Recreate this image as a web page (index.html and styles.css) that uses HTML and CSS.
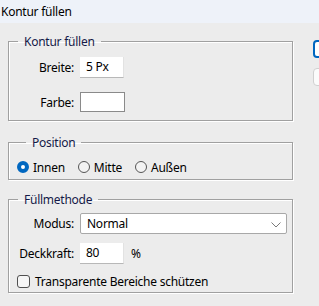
FILE: index.html
```html
<!DOCTYPE html>
<html lang="de">
<head>
<meta charset="utf-8">
<title>Kontur füllen</title>
<link rel="stylesheet" href="styles.css">
</head>
<body>
<div class="title">Kontur füllen</div>
<div class="main">
  <div class="left">
    <fieldset class="group g1">
      <legend>Kontur füllen</legend>
      <div class="row">
        <span class="lbl">Breite:</span>
        <div class="input">5 Px</div>
      </div>
      <div class="row r2">
        <span class="lbl">Farbe:</span>
        <div class="swatch"></div>
      </div>
    </fieldset>
    <fieldset class="group g2">
      <legend>Position</legend>
      <div class="radios">
        <span class="opt"><span class="radio on"></span>Innen</span>
        <span class="opt"><span class="radio"></span>Mitte</span>
        <span class="opt"><span class="radio"></span>Außen</span>
      </div>
    </fieldset>
    <fieldset class="group g3">
      <legend>Füllmethode</legend>
      <div class="row">
        <span class="lbl">Modus:</span>
        <div class="select">Normal
          <svg class="chev" width="10" height="6" viewBox="0 0 10 6"><polyline points="0.5,0.5 5,5 9.5,0.5" fill="none" stroke="#7a7a7a" stroke-width="1"/></svg>
        </div>
      </div>
      <div class="row r3">
        <span class="lbl">Deckkraft:</span>
        <div class="input">80</div>
        <span class="pct">%</span>
      </div>
      <div class="check-row">
        <span class="check"></span>Transparente Bereiche schützen
      </div>
    </fieldset>
  </div>
  <div class="right">
    <div class="btn primary"></div>
    <div class="btn"></div>
  </div>
</div>
</body>
</html>
```

FILE: styles.css
```css
html, body {
  margin: 0;
  padding: 0;
}
body {
  width: 319px;
  height: 306px;
  overflow: hidden;
  background: #ececec;
  font-family: "Noto Sans", "Open Sans", sans-serif;
  font-size: 12px;
  letter-spacing: -0.25px;
  color: #000;
}
.title {
  height: 23px;
  line-height: 23px;
  padding-left: 1px;
  background: #eef2f9;
}
.main {
  display: flex;
  gap: 19px;
  padding: 11px 0 0 8px;
}
.left {
  width: 286px;
  flex: none;
  display: flex;
  flex-direction: column;
}
.group {
  margin: 0;
  padding: 0;
  width: 285px;
  box-sizing: border-box;
  border: 1px solid #a0a0a0;
  box-shadow: inset 1px 1px 0 #fff, 1px 1px 0 #fff;
}
.group legend {
  margin-left: 9px;
  padding: 0 6px;
  line-height: 15px;
  color: #151a48;
}
.g1 { padding: 8px 0 8px 0; }
.g2 { margin-top: 14px; padding: 9px 0 4px 8px; }
.g3 { margin-top: 12px; padding: 6px 0 3px 0; }
.row {
  display: flex;
  align-items: center;
  height: 21px;
}
.r2 { margin-top: 14px; height: 20px; }
.r3 { margin-top: 9px; }
.lbl {
  width: 65px;
  margin-right: 6px;
  text-align: right;
}
.input {
  width: 44px;
  height: 21px;
  box-sizing: border-box;
  background: #fff;
  border-bottom: 1px solid #b8b8b8;
  border-right: 1px solid #e2e2e2;
  padding-left: 6px;
  line-height: 20px;
}
.swatch {
  width: 45px;
  height: 20px;
  box-sizing: border-box;
  background: #fff;
  border: 1px solid #8a8a8a;
}
.select {
  position: relative;
  width: 207px;
  height: 21px;
  box-sizing: border-box;
  background: #fff;
  border: 1px solid #a8a8a8;
  border-radius: 2px;
  padding-left: 6px;
  line-height: 19px;
}
.chev {
  position: absolute;
  right: 5px;
  top: 8px;
}
.pct { margin-left: 7px; }
.radios {
  display: flex;
  align-items: center;
  height: 16px;
  gap: 13px;
}
.opt {
  display: flex;
  align-items: center;
  gap: 4px;
}
.radio {
  width: 12px;
  height: 12px;
  box-sizing: border-box;
  border-radius: 50%;
  border: 1px solid #555;
  background: #f3f3f3;
}
.radio.on {
  border: 4px solid #0067c0;
  background: #fff;
}
.check-row {
  margin-top: 9px;
  height: 16px;
  display: flex;
  align-items: center;
  padding-left: 8px;
}
.check {
  width: 13px;
  height: 13px;
  box-sizing: border-box;
  border: 1px solid #505050;
  border-radius: 3px;
  background: #f6f6f6;
  margin-right: 5px;
}
.right {
  flex: 1;
  min-width: 0;
  overflow: hidden;
  display: flex;
  flex-direction: column;
  gap: 10px;
  padding-top: 6px;
}
.btn {
  width: 40px;
  height: 18px;
  flex: none;
  box-sizing: border-box;
  border-radius: 4px;
  border: 1px solid #d0d0d0;
  background: #fbfbfb;
}
.btn.primary {
  border: 2px solid #0067c0;
  background: #fff;
}
```
